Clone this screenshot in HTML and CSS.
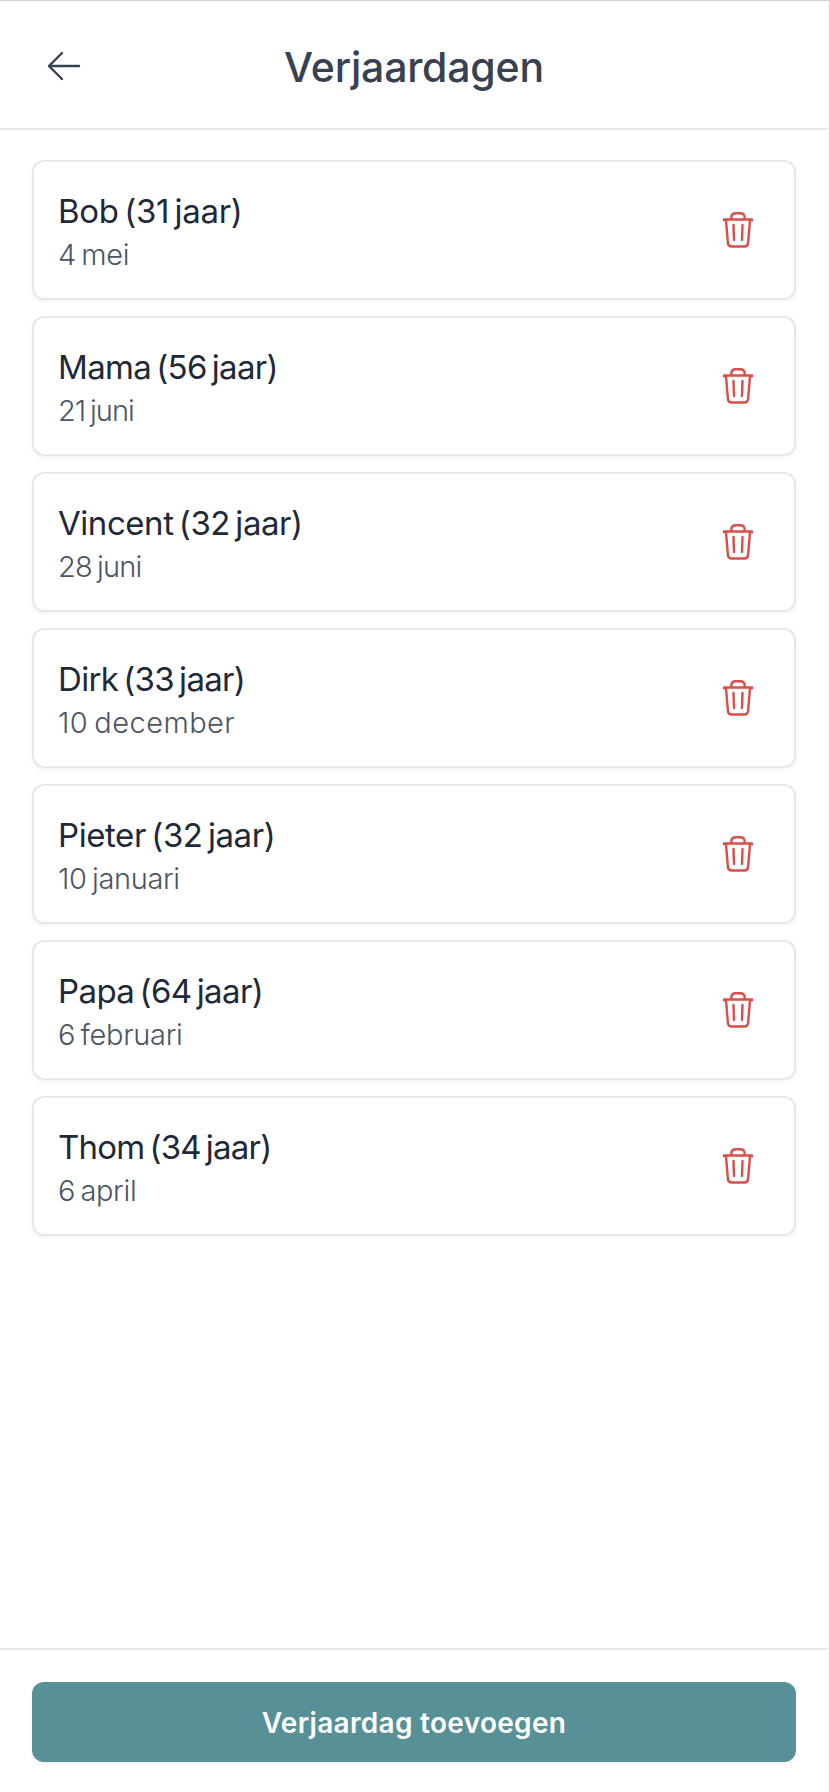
FILE: index.html
```html
<!DOCTYPE html>
<html lang="nl">
<head>
<meta charset="utf-8">
<title>Verjaardagen</title>
<link rel="stylesheet" href="styles.css">
</head>
<body>
<svg class="sprite" aria-hidden="true">
  <symbol id="trash" viewBox="0 0 48 48">
    <path d="M10 16.200v-.7h28v.7M17.300 15.200v-1.400q0-4.500 4.500-4.500h4.400q4.500 0 4.500 4.500v1.400M12 16l1.900 22.900q.3 3.600 3.800 3.600h12.600q3.500 0 3.800-3.600L36 16M19.500 21l.5 15M28.500 21l-.5 15"/>
  </symbol>
</svg>
<div class="screen">
  <header class="header">
    <button class="back" aria-label="Terug"><svg viewBox="0 0 36 30"><path d="M16 2 3 15l13 13M3 15h30"/></svg></button>
    <h1 class="title">Verjaardagen</h1>
  </header>
  <main class="list">
    <article class="card bob"><div><h2 class="name">Bob (31 jaar)</h2><p class="date">4 mei</p></div><button class="delete" aria-label="Verwijder"><svg><use href="#trash"/></svg></button></article>
    <article class="card mama"><div><h2 class="name">Mama (56 jaar)</h2><p class="date">21 juni</p></div><button class="delete" aria-label="Verwijder"><svg><use href="#trash"/></svg></button></article>
    <article class="card vincent"><div><h2 class="name">Vincent (32 jaar)</h2><p class="date">28 juni</p></div><button class="delete" aria-label="Verwijder"><svg><use href="#trash"/></svg></button></article>
    <article class="card dirk"><div><h2 class="name">Dirk (33 jaar)</h2><p class="date">10 december</p></div><button class="delete" aria-label="Verwijder"><svg><use href="#trash"/></svg></button></article>
    <article class="card pieter"><div><h2 class="name">Pieter (32 jaar)</h2><p class="date">10 januari</p></div><button class="delete" aria-label="Verwijder"><svg><use href="#trash"/></svg></button></article>
    <article class="card papa"><div><h2 class="name">Papa (64 jaar)</h2><p class="date">6 februari</p></div><button class="delete" aria-label="Verwijder"><svg><use href="#trash"/></svg></button></article>
    <article class="card thom"><div><h2 class="name">Thom (34 jaar)</h2><p class="date">6 april</p></div><button class="delete" aria-label="Verwijder"><svg><use href="#trash"/></svg></button></article>
  </main>
  <footer class="footer"><button class="add">Verjaardag toevoegen</button></footer>
</div>
</body>
</html>
```
FILE: styles.css
```css
* { box-sizing: border-box; margin: 0; }
body { font-family: Inter, "Liberation Sans", sans-serif; background: #fff; }
button { border: 0; padding: 0; background: none; color: inherit; font: inherit; }
svg { display: block; fill: none; stroke: currentColor; stroke-width: 2.4; stroke-linecap: round; stroke-linejoin: round; }
.sprite { display: none; }
.screen { display: flex; flex-direction: column; height: 1792px; border-top: 1px solid #d1d1d3; border-right: 1px solid #d1d1d3; padding-right: 1px; }
.header { display: grid; grid-template-columns: 64px 1fr 64px; align-items: center; height: 129px; padding: 2px 32px 0; border-bottom: 2px solid #e5e5eb; color: #374151; }
.back { padding-left: 14px; }
.back svg { width: 36px; height: 30px; }
.title { padding-top: 2px; text-align: center; font-size: 41px; font-weight: 500; line-height: 56px; letter-spacing: -.2px; }
.list { flex: 1; display: flex; flex-direction: column; gap: 16px; padding: 30px 32px; }
.card { display: flex; justify-content: space-between; align-items: center; height: 140px; padding: 2px 32px 0 24px; border: 2px solid #e5e7eb; border-radius: 12px; box-shadow: 0 2px 4px rgba(0,0,0,.05); }
.name { color: #1f2937; font-size: 33px; font-weight: 400; line-height: 48px; letter-spacing: var(--name-track); word-spacing: -3.5px; }
.date { color: #4b5563; font-size: 29px; font-weight: 300; line-height: 40px; letter-spacing: var(--date-track); word-spacing: -2.5px; }
.bob { --name-track: -.3px; --date-track: -.3px; }
.mama { --name-track: -.68px; --date-track: -.95px; }
.vincent { --name-track: -.45px; --date-track: -.75px; }
.dirk { --name-track: -.68px; --date-track: .45px; }
.pieter { --name-track: -.42px; --date-track: -.35px; }
.papa { --name-track: -.6px; --date-track: -.3px; }
.thom { --name-track: -.78px; --date-track: -.35px; }
.delete { padding-bottom: 6px; color: #dc4c48; }
.delete svg { width: 48px; height: 48px; }
.footer { height: 144px; padding: 32px; border-top: 2px solid #e5e5eb; }
.add { width: 100%; height: 80px; padding-top: 2px; border-radius: 12px; background: #579197; color: #fff; font-size: 28px; font-weight: 600; letter-spacing: .3px; box-shadow: 0 2px 4px rgba(0,0,0,.05); }
```
